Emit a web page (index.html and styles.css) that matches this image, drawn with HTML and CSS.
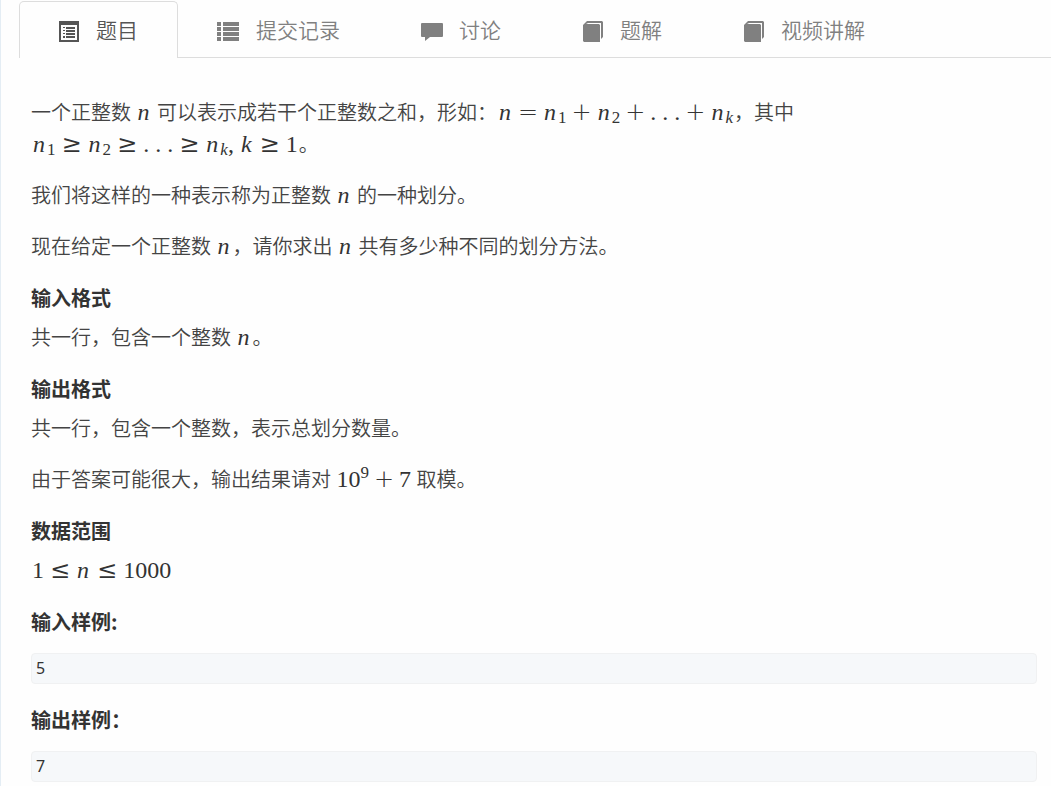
FILE: index.html
```html
<!DOCTYPE html>
<html lang="zh-CN">
  <head>
    <meta charset="UTF-8" />
    <meta name="viewport" content="width=device-width, initial-scale=1.0" />
    <title>整数划分</title>
    <link rel="stylesheet" href="styles.css">
  </head>
  <body>
    <!-- Tabs -->
    <nav class="tabs">
      <a class="tab active" href="#problem">
        <svg class="icon" viewBox="0 -1 22 22">
          <path fill-rule="evenodd" d="M0 0h20v21H0zM2 4v15h16V4z" />
          <path d="M4 6h2v1H4zM7 6h9v2H7zM4 9h2v1H4zM7 9h9v2H7zM4 12h2v1H4zM7 12h9v2H7zM4 15h2v2H4zM7 15h9v2H7z" />
        </svg>
        题目
      </a>
      <a class="tab" href="#submissions">
        <svg class="icon" viewBox="2 0 22 22">
          <path d="M0 2h4v4H0zM6 2h16v4H6zM0 7h4v4H0zM6 7h16v4H6zM0 12h4v4H0zM6 12h16v4H6zM0 17h4v4H0zM6 17h16v4H6z" />
        </svg>
        提交记录
      </a>
      <a class="tab" href="#discussion">
        <svg class="icon" viewBox="1 -1 22 22">
          <path d="M1 2h20a1 1 0 0 1 1 1v12a1 1 0 0 1-1 1H9l-5 4v-4H1a1 1 0 0 1-1-1V3a1 1 0 0 1 1-1z" />
        </svg>
        讨论
      </a>
      <a class="tab" href="#solutions">
        <svg class="icon" viewBox="0 -1 22 22">
          <path d="M0 4L4 0h15l1 1v15l-2 2V2H5L3 3h13l1 1v17H1l-1-1z" />
        </svg>
        题解
      </a>
      <a class="tab" href="#video">
        <svg class="icon" viewBox="0 -1 22 22">
          <path d="M0 4L4 0h15l1 1v15l-2 2V2H5L3 3h13l1 1v17H1l-1-1z" />
        </svg>
        视频讲解
      </a>
    </nav>

    <!-- Problem statement -->
    <main class="problem" id="problem">
      <p>
        一个正整数 <span class="math"><i>n</i></span> 可以表示成若干个正整数之和，形如：<span class="math"><i>n</i><b>=</b><i>n</i><sub>1</sub><b>+</b><i>n</i><sub>2</sub><b>+</b>. . .<b>+</b><i>n</i><sub><i>k</i></sub></span>，其中<br>
        <span class="math"><i>n</i><sub>1</sub><b class="rel">≥</b><i>n</i><sub>2</sub><b class="rel">≥</b>. . .<b class="rel">≥</b><i>n</i><sub><i>k</i></sub>, <i>k</i><b class="rel">≥</b>1</span>。
      </p>
      <p>我们将这样的一种表示称为正整数 <span class="math"><i>n</i></span> 的一种划分。</p>
      <p>现在给定一个正整数 <span class="math"><i>n</i></span>，请你求出 <span class="math"><i>n</i></span> 共有多少种不同的划分方法。</p>

      <h4>输入格式</h4>
      <p>共一行，包含一个整数 <span class="math"><i>n</i></span>。</p>

      <h4>输出格式</h4>
      <p>共一行，包含一个整数，表示总划分数量。</p>
      <p>由于答案可能很大，输出结果请对 <span class="math">10<sup>9</sup><b>+</b>7</span> 取模。</p>

      <h4>数据范围</h4>
      <p><span class="math">1<b class="rel">≤</b><i>n</i><b class="rel">≤</b>1000</span></p>

      <h4>输入样例:</h4>
      <pre>5</pre>

      <h4>输出样例：</h4>
      <pre>7</pre>
    </main>
  </body>
</html>
```
FILE: styles.css
```css
/* General Styling */
* {
  margin: 0;
  padding: 0;
  box-sizing: border-box;
}

body {
  min-height: 100vh;
  border-left: 1px solid #e4edf4;
  background-color: #fefefe;
  color: #333;
  font-family: "Noto Sans CJK SC", sans-serif;
  font-size: 20px;
  font-weight: 350;
  line-height: 32px;
}

/* Tabs */
.tabs {
  display: flex;
  padding: 1px 0 0 18px;
}

.tab {
  display: flex;
  flex: none;
  align-items: center;
  gap: 15px;
  height: 57px;
  padding: 1px 41px 2px;
  border-bottom: 1px solid #ddd;
  color: #808080;
  font-size: 21px;
  text-decoration: none;
  white-space: nowrap;
}

.tab.active {
  padding: 0 39px 2px;
  border: 1px solid #ddd;
  border-bottom: none;
  border-radius: 5px 5px 0 0;
  color: #555;
}

/* line under the empty part of the bar */
.tabs::after {
  content: "";
  flex: 1;
  border-bottom: 1px solid #ddd;
}

.icon {
  width: 22px;
  height: 22px;
  margin-top: 4px;
  overflow: visible;
  fill: currentColor;
}

/* Problem statement */
.problem {
  padding: 38px 14px 0 30px;
}

p {
  margin-bottom: 19px;
  color: #444;
}

h4 {
  margin: 25px 0 12px;
  font-size: 20px;
  font-weight: 700;
  line-height: 22px;
}

pre {
  margin-top: 20px;
  padding: 4px;
  border: 1px solid #f0f1f2;
  border-radius: 4px;
  background-color: #f6f8fa;
  font-family: "Noto Sans", sans-serif;
  font-size: 16px;
  font-weight: 400;
  line-height: 21px;
}

/* Formulas */
.math {
  margin: 0 1px;
  color: #333;
  font-family: "Liberation Serif", serif;
  font-size: 24px;
  font-weight: 400;
  line-height: 24px;
  white-space: nowrap;
}

.math i {
  padding: 0 2px 0 1px;
}

.math b {
  margin: 0 5px;
  font-family: "DejaVu Sans", "DejaVu Serif", serif;
  font-weight: 200;
}

.math .rel {
  margin: 0 6px;
}

.math sub,
.math sup {
  font-size: 17px;
  line-height: 0;
}

.math sub {
  vertical-align: -3px;
}

.math sub i {
  padding: 0;
}

.math sup {
  vertical-align: 9px;
}
```
